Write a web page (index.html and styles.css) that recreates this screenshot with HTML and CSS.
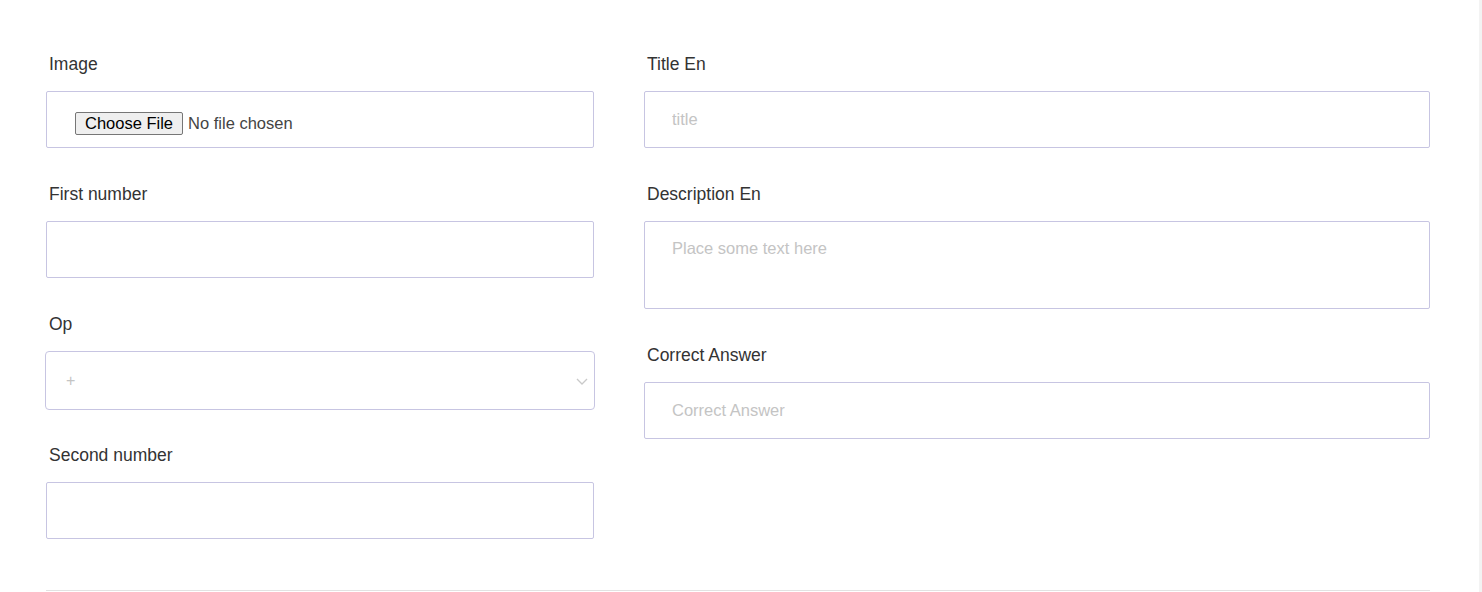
FILE: index.html
```html
<!DOCTYPE html>
<html lang="en">
<head>
<meta charset="utf-8">
<title>Question form</title>
<link rel="stylesheet" href="styles.css">
</head>
<body>
<div class="page">
  <main class="content">
    <form class="form-grid">
      <div class="col">
        <div class="group">
          <label class="label">Image</label>
          <input class="control file-control" type="file">
        </div>
        <div class="group">
          <label class="label">First number</label>
          <input class="control" type="text">
        </div>
        <div class="group">
          <label class="label">Op</label>
          <div class="select-wrap">
            <select class="control select-control">
              <option>+</option>
              <option>-</option>
              <option>*</option>
              <option>/</option>
            </select>
            <svg class="chevron" width="12" height="7" viewBox="0 0 12 7"><path d="M1 1l5 5 5-5" fill="none" stroke="#c9c9c9" stroke-width="1.3"/></svg>
          </div>
        </div>
        <div class="group">
          <label class="label">Second number</label>
          <input class="control" type="text">
        </div>
      </div>
      <div class="col">
        <div class="group">
          <label class="label">Title En</label>
          <input class="control" type="text" placeholder="title">
        </div>
        <div class="group">
          <label class="label">Description En</label>
          <textarea class="control textarea-control" placeholder="Place some text here"></textarea>
        </div>
        <div class="group">
          <label class="label">Correct Answer</label>
          <input class="control" type="text" placeholder="Correct Answer">
        </div>
      </div>
    </form>
    <hr class="divider">
  </main>
  <aside class="side-strip"></aside>
</div>
</body>
</html>
```

FILE: styles.css
```css
html, body {
  margin: 0;
  padding: 0;
  background: #ffffff;
}

body {
  font-family: "Liberation Sans", Arial, sans-serif;
  color: #333333;
  height: 592px;
  overflow: hidden;
}

.page {
  display: flex;
  height: 592px;
}

.content {
  flex: 1;
  padding: 51px 49px 0 46px;
  background: #ffffff;
}

.side-strip {
  width: 3px;
  background: #f3f3f3;
}

.form-grid {
  display: grid;
  grid-template-columns: 548fr 786fr;
  column-gap: 50px;
  align-items: start;
}

.col {
  display: flex;
  flex-direction: column;
  gap: 33px;
}

.group {
  display: flex;
  flex-direction: column;
}

.label {
  font-size: 17.5px;
  line-height: 26px;
  margin: 0 0 14px 3px;
  color: #333333;
}

.control {
  box-sizing: border-box;
  width: 100%;
  height: 57px;
  border: 1px solid #c7c5e2;
  border-radius: 2px;
  background: #ffffff;
  font-family: "Liberation Sans", Arial, sans-serif;
  font-size: 16.5px;
  color: #444444;
  padding: 0 27px;
  margin: 0;
  outline: none;
}

.control::placeholder {
  color: #c4c4c4;
}

.file-control {
  padding: 20px 28px 0 28px;
  color: #444444;
}

.file-control::file-selector-button {
  font-family: "Liberation Sans", Arial, sans-serif;
  font-size: 16.5px;
  color: #000000;
  background: #efefef;
  border: 1px solid #767676;
  border-radius: 2px;
  padding: 1px 9px;
  margin: 0 5px 0 0;
}

.select-wrap {
  position: relative;
  margin: 0 -1px -1px;
}

.select-control {
  appearance: none;
  -webkit-appearance: none;
  height: 59px;
  border-radius: 4px;
  padding-left: 20px;
  color: #c4c4c4;
  font-size: 16px;
}

.chevron {
  position: absolute;
  right: 7px;
  top: 27px;
  pointer-events: none;
}

.textarea-control {
  height: 88px;
  padding: 17px 27px;
  resize: none;
  display: block;
  line-height: 19px;
}

.divider {
  border: 0;
  border-top: 1px solid #e2e2e2;
  margin: 51px 0 0 0;
}
```
